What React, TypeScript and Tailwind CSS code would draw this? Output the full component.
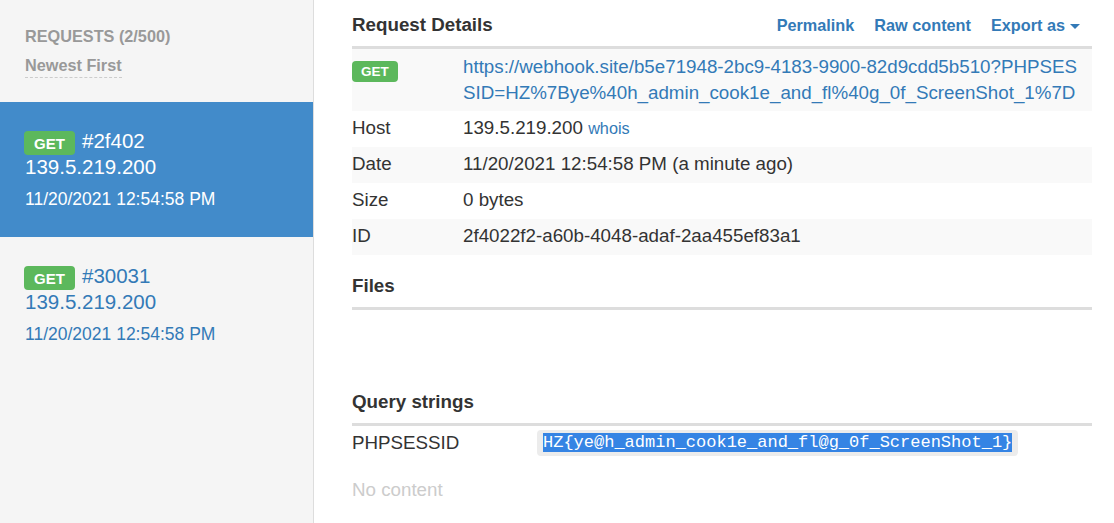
import React from 'react';

const requests = [
  { id: '#2f402', ip: '139.5.219.200', date: '11/20/2021 12:54:58 PM', active: true },
  { id: '#30031', ip: '139.5.219.200', date: '11/20/2021 12:54:58 PM', active: false },
];

const GetBadge = ({ small }: { small?: boolean }) => (
  <span
    className={
      small
        ? 'inline-flex h-[21px] w-[46px] items-center justify-center rounded-[4px] bg-[#5cb85c] text-[13.5px] font-bold leading-none text-white'
        : 'inline-flex h-[24px] w-[51px] items-center justify-center rounded-[4px] bg-[#5cb85c] text-[15px] font-bold leading-none text-white'
    }
  >
    GET
  </span>
);

const App = () => {
  const rows = [
    { label: 'Host', value: <>139.5.219.200 <a className="text-[16.25px] text-[#337ab7]">whois</a></> },
    { label: 'Date', value: '11/20/2021 12:54:58 PM (a minute ago)' },
    { label: 'Size', value: '0 bytes' },
    { label: 'ID', value: '2f4022f2-a60b-4048-adaf-2aa455ef83a1' },
  ];

  return (
    <div className="flex h-[523px] w-[1114px] overflow-hidden bg-white font-['Liberation_Sans',Arial,sans-serif] text-[#333]">
      {/* Sidebar */}
      <aside className="w-[314px] shrink-0 border-r border-[#ddd] bg-[#f5f5f5]">
        <div className="px-[25px] pt-[26px]">
          <div className="text-[16.25px] font-bold leading-[20px] text-[#999]">REQUESTS (2/500)</div>
          <div className="mt-[9px] inline-block border-b border-dashed border-[#ccc] pb-[2px] text-[16.25px] font-bold leading-[20px] text-[#999]">
            Newest First
          </div>
        </div>
        <div className="mt-[24px]">
          {requests.map((r) => (
            <div
              key={r.id}
              className={
                r.active
                  ? 'bg-[#428bca] px-[24px] pb-[27px] pt-[26px] text-white'
                  : 'px-[24px] pb-[27px] pt-[26px] text-[#337ab7]'
              }
            >
              <div className="flex h-[26px] items-center gap-[7px] text-[20.5px] leading-[26px]">
                <span className="mt-[4px] flex"><GetBadge /></span>
                <span>{r.id}</span>
              </div>
              <div className="pl-[1px] text-[20.5px] leading-[26px]">{r.ip}</div>
              <div className="mt-[8px] pl-[1px] text-[17.5px] leading-[22px]">{r.date}</div>
            </div>
          ))}
        </div>
      </aside>

      {/* Main */}
      <main className="flex-1 pl-[38px] pr-[22px]">
        <div className="flex h-[46px] items-center justify-between pt-[4px]">
          <h2 className="text-[18.75px] font-bold leading-[22px]">Request Details</h2>
          <div className="flex items-center gap-[20px] pr-[12px] text-[16.25px] font-bold text-[#337ab7]">
            <a>Permalink</a>
            <a>Raw content</a>
            <a className="flex items-center gap-[5px]">
              Export as
              <span className="mt-[2px] h-0 w-0 border-x-[5px] border-t-[5px] border-x-transparent border-t-[#337ab7]" />
            </a>
          </div>
        </div>

        <table className="w-full border-t-[3px] border-[#ddd] text-[18.75px] leading-[26px]">
          <tbody>
            <tr className="bg-[#f9f9f9]">
              <td className="w-[111px] pt-[8px] align-top">
                <GetBadge small />
              </td>
              <td className="break-all py-[5px] pr-[6px] text-[#337ab7]">
                https://webhook.site/b5e71948-2bc9-4183-9900-82d9cdd5b510?PHPSESSID=HZ%7Bye%40h_admin_cook1e_and_fl%40g_0f_ScreenShot_1%7D
              </td>
            </tr>
            {rows.map((row, i) => (
              <tr key={row.label} className={i % 2 === 1 ? 'bg-[#f9f9f9]' : ''}>
                <td className="pb-[6px] pt-[4px]">{row.label}</td>
                <td className="pb-[6px] pt-[4px]">{row.value}</td>
              </tr>
            ))}
          </tbody>
        </table>

        <h3 className="mt-[20px] text-[18.75px] font-bold leading-[22px]">Files</h3>
        <div className="mt-[10px] h-[3px] bg-[#ddd]" />

        <h3 className="mt-[81px] text-[18.75px] font-bold leading-[22px]">Query strings</h3>
        <div className="mt-[10px] h-[3px] bg-[#ddd]" />
        <div className="flex items-center pt-[4px] text-[18.75px] leading-[26px]">
          <div className="w-[185px]">PHPSESSID</div>
          <code className="rounded-[4px] bg-[#ececec] px-[6px] py-[3px] font-['Liberation_Mono',monospace] text-[17px] leading-[20px]">
            <span className="bg-[#3584e4] text-white">HZ{'{'}ye@h_admin_cook1e_and_fl@g_0f_ScreenShot_1{'}'}</span>
          </code>
        </div>
        <div className="mt-[23px] text-[18.75px] leading-[22px] text-[#ccc]">No content</div>
      </main>
    </div>
  );
};

export default App;
